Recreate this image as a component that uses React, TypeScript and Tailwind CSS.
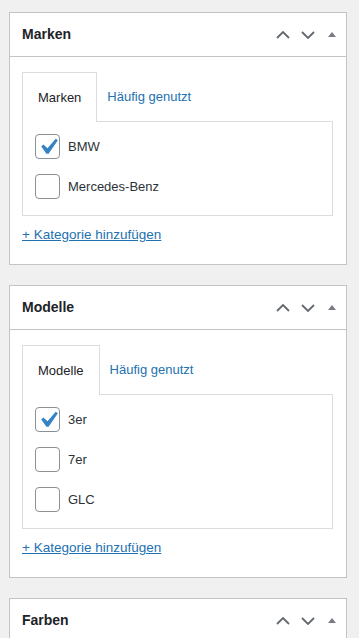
import React from "react";

type Item = { label: string; checked: boolean };

function CheckMark() {
  return (
    <svg viewBox="0 0 20 20" className="w-[32px] h-[32px] shrink-0" aria-hidden>
      <path
        d="M14.83 4.89l1.34.94-5.81 8.38H9.02L5.78 9.67l1.34-1.25 2.57 2.4z"
        fill="#3582c4"
      />
    </svg>
  );
}

function Checkbox({ checked }: { checked: boolean }) {
  return (
    <span className="w-[25px] h-[25px] shrink-0 rounded-[4px] border border-[#8c8f94] bg-white flex items-center justify-center overflow-visible">
      {checked && <CheckMark />}
    </span>
  );
}

function HeaderIcons() {
  return (
    <div className="flex items-center">
      <span className="w-[25px] h-[36px] flex items-center justify-center">
        <svg viewBox="0 0 14 8" className="w-[14px] h-[8px]" aria-hidden>
          <path d="M1 7l6-6 6 6" fill="none" stroke="#646970" strokeWidth="1.8" />
        </svg>
      </span>
      <span className="w-[25px] h-[36px] flex items-center justify-center">
        <svg viewBox="0 0 14 8" className="w-[14px] h-[8px]" aria-hidden>
          <path d="M1 1l6 6 6-6" fill="none" stroke="#646970" strokeWidth="1.8" />
        </svg>
      </span>
      <span className="w-[24px] h-[36px] flex items-center justify-center">
        <svg viewBox="0 0 8 5" className="w-[8px] h-[5px]" aria-hidden>
          <path d="M0 5L4 0l4 5z" fill="#787c82" />
        </svg>
      </span>
    </div>
  );
}

function MetaBox({
  title,
  items,
  collapsed,
}: {
  title: string;
  items?: Item[];
  collapsed?: boolean;
}) {
  return (
    <section className="ml-[9px] mr-[12px] bg-white border border-[#c3c4c7]">
      <div className="h-[44px] flex items-center justify-between pl-[12px] pr-[2px] border-b border-[#c3c4c7]">
        <h2 className="text-[14px] font-semibold text-[#1d2327]">{title}</h2>
        <HeaderIcons />
      </div>
      {!collapsed && items && (
        <div className="px-[12px] pt-[15px] pb-[21px]">
          <div className="flex items-end">
            <div className="relative z-10 -mb-px h-[50px] px-[15px] flex items-center bg-white border-t border-l border-r border-[#dcdcde] text-[13px] text-[#1d2327]">
              {title}
            </div>
            <div className="h-[49px] pl-[10px] flex items-center text-[13px] text-[#2271b1]">
              Häufig genutzt
            </div>
          </div>
          <div className="border border-[#dcdcde] pl-[12px] pt-[12px] pb-[16px] flex flex-col gap-[15px] mr-px">
            {items.map((it) => (
              <label key={it.label} className="flex items-center gap-[8px] text-[13px] text-[#2c3338]">
                <Checkbox checked={it.checked} />
                <span>{it.label}</span>
              </label>
            ))}
          </div>
          <a className="block mt-[11px] text-[13.5px] font-medium text-[#2271b1] underline leading-[16px]">
            + Kategorie hinzufügen
          </a>
        </div>
      )}
    </section>
  );
}

export default function App() {
  return (
    <main
      className="bg-[#f0f0f1] pt-[12px] flex flex-col gap-[20px] overflow-hidden h-[638px]"
      style={{ fontFamily: '"Liberation Sans", Arial, sans-serif' }}
    >
      <MetaBox
        title="Marken"
        items={[
          { label: "BMW", checked: true },
          { label: "Mercedes-Benz", checked: false },
        ]}
      />
      <MetaBox
        title="Modelle"
        items={[
          { label: "3er", checked: true },
          { label: "7er", checked: false },
          { label: "GLC", checked: false },
        ]}
      />
      <MetaBox title="Farben" collapsed />
    </main>
  );
}
